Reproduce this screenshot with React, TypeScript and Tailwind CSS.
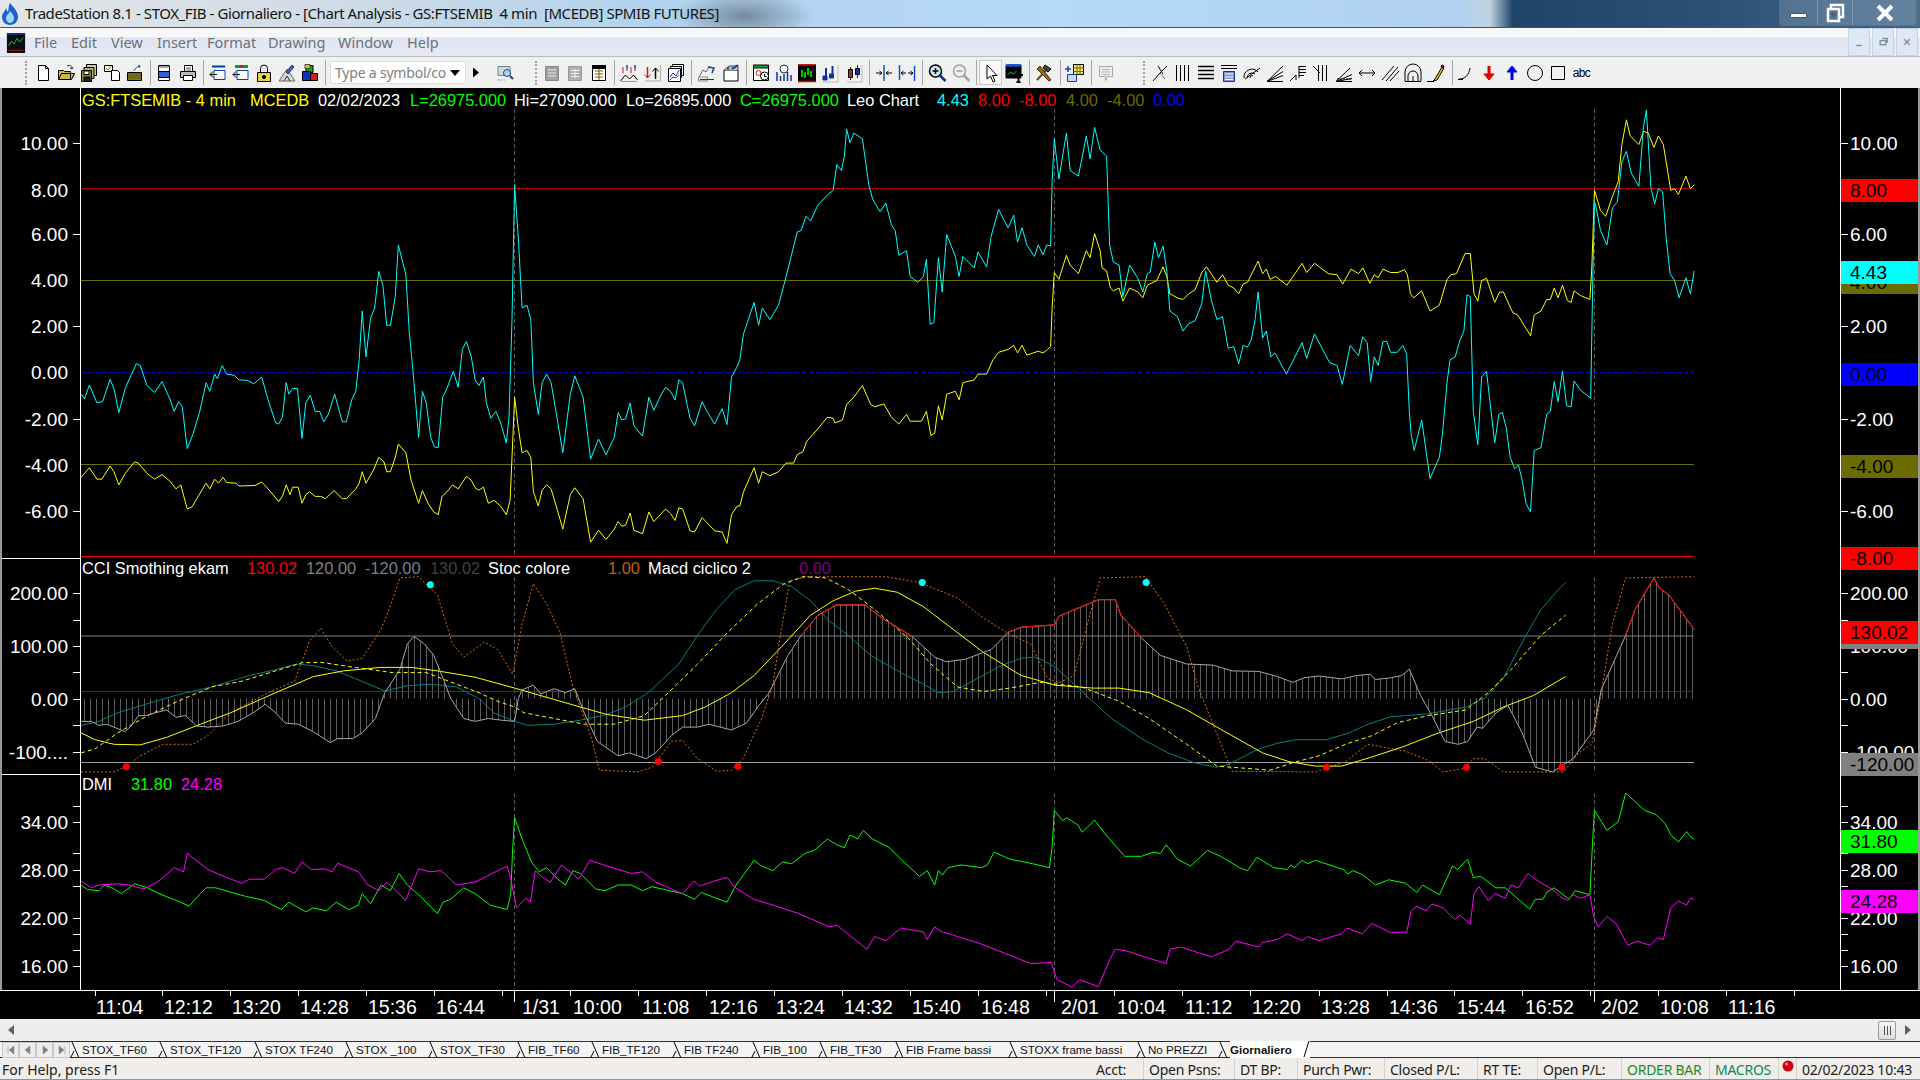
import type { ReactNode } from 'react'

// zoomed-crop coordinates are converted to page coordinates
const SX = 590 / 1568
const SY = 900 / 1568
const OX = [80, 660, 1240]

type Pt = [number, number]

function parse(raw: string, ox: number): Pt[] {
  return raw
    .trim()
    .split(/\s+/)
    .map((p) => {
      const [x, y] = p.split(',').map(Number)
      return [ox + x * SX, 90 + y * SY] as Pt
    })
}

function series(a: string, b: string, c: string): Pt[] {
  return [
    ...parse(a, OX[0]).filter((p) => p[0] <= 665),
    ...parse(b, OX[1]).filter((p) => p[0] > 665 && p[0] <= 1245),
    ...parse(c, OX[2]).filter((p) => p[0] > 1245),
  ]
}

const pts = (p: Pt[]) => p.map(([x, y]) => `${x.toFixed(1)},${y.toFixed(1)}`).join(' ')

function yAt(curve: Pt[], x: number) {
  for (let i = 1; i < curve.length; i++) {
    if (curve[i][0] >= x) {
      const [x0, y0] = curve[i - 1]
      const [x1, y1] = curve[i]
      return y0 + ((y1 - y0) * (x - x0)) / Math.max(x1 - x0, 0.01)
    }
  }
  return curve[curve.length - 1][1]
}

const CYAN = series(
  '3,530 12,538 25,514 45,545 60,543 80,504 90,520 103,562 120,520 130,505 150,477 160,480 178,515 198,527 218,508 240,540 250,560 262,543 272,552 285,625 300,600 318,560 335,510 345,525 358,495 365,503 378,480 390,495 410,497 422,505 445,506 462,512 483,500 500,540 520,580 528,582 538,570 548,510 555,530 565,520 578,520 590,607 600,545 612,532 625,560 637,560 648,578 660,565 677,530 697,578 708,578 722,540 733,525 742,470 750,385 760,465 772,398 783,380 794,316 805,340 815,410 825,410 838,360 846,270 866,322 875,420 885,490 900,605 910,525 920,545 932,605 942,622 952,623 964,535 975,520 992,490 1005,518 1016,452 1027,438 1040,465 1050,505 1060,515 1072,500 1080,545 1092,572 1105,560 1118,580 1133,615 1140,570 1148,400 1155,165 1165,260 1175,380 1188,375 1198,400 1205,510 1218,565 1228,510 1240,495 1252,510 1270,580 1283,632 1303,530 1315,498 1337,535 1357,643 1378,608 1398,635 1420,605 1430,562 1440,575 1450,573 1462,545 1472,585 1495,603 1512,535 1525,558 1545,530 1560,515 1568,525',
  '0,538 15,518 28,525 40,540 50,505 60,510 72,548 80,572 92,585 112,543 125,560 145,582 165,555 178,583 190,500 205,482 212,470 222,425 250,370 262,410 272,380 292,400 315,375 335,325 365,247 375,245 388,220 400,228 420,200 445,183 460,175 470,130 482,140 490,115 496,68 505,92 515,75 538,85 555,165 565,190 585,212 600,197 615,235 625,245 635,288 655,280 665,325 685,335 700,325 708,295 718,408 728,405 740,292 750,352 762,252 785,290 795,325 805,290 835,310 845,282 868,308 880,255 900,208 925,240 940,218 950,265 962,240 975,270 995,290 1005,270 1018,287 1028,270 1038,272 1042,160 1048,85 1060,155 1080,75 1090,140 1112,150 1133,80 1143,120 1155,65 1170,105 1187,115 1195,270 1205,300 1220,305 1230,360 1248,305 1270,328 1283,352 1295,320 1303,317 1315,265 1325,292 1337,272 1347,315 1355,385 1375,395 1390,420 1405,407 1422,402 1440,372 1450,315 1465,365 1480,400 1495,395 1510,450 1525,447 1538,477 1550,445 1568,435',
  '0,465 8,445 20,448 30,435 40,400 48,352 60,432 70,420 82,465 93,458 123,495 165,440 177,468 198,425 238,475 258,480 272,513 293,445 315,463 326,430 338,440 347,508 357,465 367,480 380,438 390,438 400,457 418,457 433,445 443,460 450,560 455,600 463,628 483,575 505,677 530,640 538,600 550,510 558,470 572,465 585,435 595,420 603,357 612,360 620,560 632,618 642,500 655,490 677,615 688,565 697,562 708,590 718,640 730,660 740,653 750,680 760,720 772,735 782,628 800,623 815,565 825,560 835,508 845,543 857,490 868,550 880,552 888,507 905,523 932,537 938,320 942,195 945,200 958,245 975,270 990,205 1003,195 1015,125 1027,107 1040,145 1060,168 1072,65 1080,35 1092,170 1102,198 1112,172 1123,177 1133,260 1143,320 1155,332 1167,362 1185,327 1197,355 1207,315',
)

const YELLOW = series(
  '3,675 12,668 25,658 45,678 58,678 80,655 90,665 103,688 120,668 145,648 155,650 178,668 198,678 218,670 240,682 255,695 268,688 285,730 298,726 335,685 345,695 358,678 368,685 380,675 390,684 415,685 422,690 465,689 483,683 500,695 528,717 538,708 548,688 558,705 565,692 580,692 590,720 600,705 610,700 625,708 640,708 652,712 675,698 697,712 708,712 733,695 742,685 750,665 760,685 780,662 794,640 808,648 815,665 825,665 838,640 846,617 866,632 880,680 900,720 910,698 925,720 940,735 952,740 962,708 975,700 990,688 1005,695 1015,685 1027,673 1040,680 1050,693 1060,697 1072,692 1085,720 1100,715 1118,725 1133,740 1143,715 1148,640 1155,535 1165,590 1175,632 1188,628 1198,640 1205,700 1218,725 1228,697 1240,688 1252,695 1270,735 1283,765 1303,705 1315,693 1337,712 1357,788 1378,767 1398,783 1420,765 1430,752 1440,760 1450,758 1462,737 1472,767 1495,773 1512,735 1525,752 1545,738 1560,730 1568,738',
  '0,738 15,730 28,738 40,750 50,728 60,730 80,768 92,770 112,745 145,768 165,770 178,790 190,740 205,725 212,725 222,700 250,658 262,685 272,665 292,672 315,665 335,650 355,650 365,635 380,630 390,612 420,590 445,570 460,572 465,580 485,575 496,548 515,535 538,515 560,548 570,552 595,547 615,570 635,582 655,565 665,577 695,577 708,560 720,602 730,598 740,550 750,575 762,530 785,525 795,540 805,510 835,505 845,495 868,495 885,470 900,457 925,452 940,445 950,458 962,445 975,462 1005,455 1018,458 1030,452 1038,447 1042,380 1048,318 1060,330 1080,288 1090,305 1112,320 1133,280 1143,292 1155,250 1170,280 1175,310 1187,315 1197,345 1205,350 1220,345 1230,368 1248,345 1270,352 1283,362 1295,340 1320,332 1337,308 1347,325 1355,355 1375,362 1390,365 1405,355 1422,348 1440,318 1452,308 1465,320 1480,335 1495,322 1510,340 1525,345 1538,355 1550,338 1568,332',
  '0,345 8,337 20,335 48,298 60,320 70,312 80,330 95,325 125,340 165,302 177,318 198,302 235,320 258,322 273,338 295,312 315,320 327,310 345,337 357,322 367,327 380,312 400,318 420,318 437,313 445,322 453,355 462,362 483,350 505,385 530,375 550,330 560,322 575,320 598,285 612,285 622,355 632,368 642,332 655,328 677,370 690,352 700,352 725,388 738,392 755,410 772,428 782,392 800,385 815,365 825,365 835,345 845,362 857,340 870,367 880,370 888,350 905,358 930,365 935,310 942,175 958,210 972,220 990,185 1005,160 1015,95 1027,52 1037,80 1060,95 1072,72 1085,75 1100,100 1112,80 1125,95 1145,175 1155,172 1165,182 1185,150 1197,172 1207,165',
)

const MACD = series(
  '3,1100 30,1100 50,1107 70,1105 90,1110 120,1118 140,1105 155,1090 175,1090 200,1085 230,1080 255,1093 280,1090 310,1108 340,1110 380,1108 420,1100 460,1085 492,1070 520,1085 545,1103 580,1105 620,1118 665,1137 685,1130 725,1130 750,1120 785,1095 810,1050 850,1010 870,965 888,952 915,965 940,985 965,1025 985,1060 1020,1095 1050,1100 1085,1095 1120,1098 1155,1100 1165,1060 1175,1045 1205,1037 1225,1052 1260,1043 1290,1050 1315,1043 1340,1085 1375,1135 1430,1160 1460,1155 1505,1165 1530,1155 1568,1135',
  '0,1145 30,1125 60,1110 100,1110 130,1105 190,1115 230,1103 260,1075 290,1050 340,985 375,950 420,915 470,897 545,897 590,920 670,952 730,988 760,996 810,992 880,975 925,945 960,936 1048,932 1060,917 1110,903 1165,888 1210,888 1225,915 1280,955 1330,985 1400,1000 1470,1002 1520,1012 1568,1018',
  '0,1015 50,1013 100,1022 140,1032 170,1024 210,1021 270,1026 310,1020 345,1018 360,1027 400,1024 430,1020 450,1009 480,1055 510,1090 545,1135 580,1140 605,1135 630,1110 645,1112 680,1085 712,1072 750,1120 785,1180 830,1188 850,1180 885,1165 940,1115 960,1045 1025,950 1050,905 1100,850 1115,868 1140,880 1207,940',
)

const MACD_RED = [
  parse('375,950 420,915 470,897 545,897 590,920 670,952', OX[1]),
  parse('925,945 960,936 1048,932 1060,917 1110,903 1165,888 1210,888 1225,915 1280,955', OX[1]),
  parse('1025,950 1050,905 1100,850 1115,868 1140,880 1207,940', OX[2]),
]

const TEAL = series(
  '3,1107 50,1100 100,1085 150,1075 200,1065 270,1052 350,1040 450,1020 520,1010 575,1000 620,1003 680,1012 730,1025 810,1047 870,1038 930,1035 1000,1040 1060,1060 1100,1085 1155,1100 1190,1107 1260,1105 1330,1098 1400,1088 1450,1075 1510,1050 1568,1020',
  '0,1040 50,1000 100,950 150,905 200,870 250,855 300,855 350,865 400,890 450,925 500,950 560,985 640,1015 700,1035 740,1050 780,1048 830,1030 900,1005 960,990 1000,988 1050,1005 1100,1035 1150,1065 1200,1095 1280,1130 1350,1155 1420,1172 1480,1180 1510,1175 1568,1157',
  '0,1163 50,1148 100,1138 150,1132 230,1132 290,1120 340,1105 400,1092 500,1087 600,1075 650,1060 700,1025 760,950 800,905 840,875 865,858',
)

const SIGNAL = series(
  '3,1120 40,1132 90,1140 160,1141 230,1128 320,1105 400,1085 520,1050 620,1022 700,1012 800,1006 880,1006 950,1012 1050,1023 1155,1042 1250,1060 1330,1075 1400,1088 1500,1098 1568,1098',
  '0,1098 60,1090 120,1075 190,1050 250,1020 330,965 400,915 460,890 520,873 570,868 630,875 700,900 770,935 860,980 960,1020 1050,1037 1150,1042 1220,1042 1300,1050 1400,1080 1480,1110 1568,1142',
  '0,1132 60,1155 130,1170 200,1178 270,1178 350,1162 430,1145 520,1122 620,1100 700,1075 780,1055 865,1022',
)

const SIGNAL_DASH = series(
  '3,1155 40,1148 100,1120 180,1090 260,1065 350,1040 430,1030 530,1010 590,998 640,997 720,1005 830,1015 920,1015 1000,1035 1060,1050 1110,1065 1155,1075 1180,1085 1260,1095 1340,1105 1420,1105 1500,1090 1568,1075',
  '0,1075 30,1045 100,1000 180,945 260,895 330,860 380,848 440,850 500,870 570,905 660,955 720,1000 790,1040 860,1048 930,1042 1010,1032 1120,1040 1220,1065 1300,1095 1400,1140 1480,1178 1568,1188',
  '0,1188 80,1185 140,1172 210,1160 280,1140 350,1125 420,1102 500,1090 600,1080 660,1050 720,1010 800,950 865,915',
)

const STOC = series(
  '3,1188 90,1188 125,1178 160,1160 220,1140 300,1140 340,1125 400,1085 500,1050 570,1030 610,960 640,938 670,970 710,995 750,990 800,940 830,890 850,850 900,848 950,880 990,965 1020,988 1075,962 1110,975 1150,1018 1175,930 1205,860 1240,895 1275,945 1310,1040 1360,1130 1380,1185 1480,1188 1520,1180 1568,1140',
  '0,1165 30,1135 60,1133 100,1165 150,1187 190,1185 220,1165 270,1095 300,1035 320,950 345,855 390,848 600,848 690,858 790,885 860,920 920,945 985,965 1030,1025 1060,1033 1100,1020 1140,920 1170,850 1290,848 1340,895 1400,970 1430,1040 1470,1105 1520,1187 1568,1188',
  '0,1188 200,1188 280,1170 340,1140 440,1152 500,1168 540,1188 590,1183 620,1165 650,1165 700,1188 860,1188 900,1155 935,1140 950,1090 990,930 1025,850 1207,848',
)

const DMI_PLUS = series(
  '3,1385 20,1393 50,1395 65,1385 85,1390 110,1400 145,1383 180,1390 210,1400 240,1408 268,1415 290,1422 320,1400 335,1390 360,1390 440,1405 490,1412 535,1428 555,1415 600,1432 620,1425 655,1430 680,1415 715,1428 740,1420 750,1400 772,1418 800,1385 825,1395 848,1365 870,1385 905,1405 950,1435 965,1415 985,1410 1020,1390 1050,1400 1090,1420 1135,1428 1145,1400 1150,1320 1155,1268 1175,1305 1200,1345 1220,1362 1240,1355 1270,1375 1290,1385 1310,1360 1330,1365 1370,1392 1395,1395 1430,1385 1465,1385 1495,1395 1520,1388 1568,1392',
  '0,1388 60,1400 92,1410 110,1398 145,1407 178,1415 200,1387 250,1342 270,1352 300,1360 325,1345 350,1348 385,1330 410,1325 445,1305 470,1315 490,1320 505,1298 525,1305 540,1290 565,1305 610,1320 640,1340 690,1370 710,1360 730,1385 740,1360 750,1368 765,1355 800,1350 855,1355 870,1350 888,1328 930,1340 990,1348 1035,1355 1042,1320 1048,1255 1070,1273 1080,1268 1110,1280 1122,1293 1155,1272 1185,1298 1235,1335 1280,1335 1310,1328 1330,1330 1345,1315 1375,1340 1410,1352 1455,1325 1490,1335 1540,1355 1568,1360',
  '0,1358 20,1360 45,1337 90,1355 125,1358 135,1350 145,1355 165,1342 180,1348 200,1342 275,1358 287,1366 300,1360 325,1367 360,1385 395,1376 440,1382 470,1398 485,1385 530,1402 565,1352 578,1358 605,1340 620,1372 640,1370 680,1390 705,1390 770,1427 785,1410 805,1410 815,1398 835,1390 875,1410 890,1395 930,1402 938,1300 942,1255 975,1290 1005,1275 1025,1225 1075,1255 1105,1262 1130,1278 1145,1298 1165,1310 1187,1292 1200,1303 1207,1305',
)

const DMI_MINUS = series(
  '3,1378 30,1390 50,1385 100,1383 130,1385 170,1392 210,1378 250,1355 275,1362 285,1330 340,1358 390,1372 430,1382 450,1375 490,1375 520,1358 540,1355 570,1365 590,1345 615,1358 650,1357 670,1362 685,1347 740,1362 765,1385 795,1395 815,1380 840,1395 865,1412 900,1357 930,1362 960,1360 1000,1385 1050,1380 1080,1370 1135,1352 1145,1375 1160,1425 1185,1408 1197,1415 1210,1360 1230,1372 1250,1380 1280,1350 1325,1375 1355,1342 1400,1352 1465,1365 1495,1362 1530,1380 1568,1392',
  '0,1388 40,1395 60,1400 90,1378 105,1387 145,1378 178,1372 200,1390 250,1410 290,1418 370,1435 450,1458 470,1455 550,1497 570,1475 600,1482 640,1460 700,1467 710,1480 730,1458 750,1467 770,1470 790,1475 850,1487 940,1510 985,1522 1040,1520 1055,1550 1095,1563 1115,1550 1165,1562 1195,1515 1210,1497 1240,1500 1345,1522 1355,1497 1385,1493 1430,1503 1465,1510 1510,1498 1530,1483 1568,1490',
  '0,1482 50,1493 60,1485 100,1480 125,1470 165,1482 180,1475 210,1482 270,1470 285,1460 325,1470 350,1452 400,1468 443,1467 455,1430 470,1422 495,1430 510,1418 540,1425 570,1445 585,1438 612,1453 622,1400 635,1388 660,1412 678,1400 705,1408 720,1385 740,1390 765,1365 785,1375 835,1395 850,1405 870,1412 885,1402 905,1408 930,1402 940,1440 952,1458 975,1440 1000,1453 1030,1490 1055,1483 1090,1490 1110,1477 1125,1480 1145,1425 1165,1413 1187,1420 1197,1408 1207,1410',
)

const HIST_BARS = Array.from({ length: 269 }, (_, i) => 84 + i * 6).filter((x) => x < 1694)

const CHART_TOP = 88
const SCALE = [
  { t: '10.00', y: 143 },
  { t: '8.00', y: 190 },
  { t: '6.00', y: 234 },
  { t: '4.00', y: 280 },
  { t: '2.00', y: 326 },
  { t: '0.00', y: 372 },
  { t: '-2.00', y: 419 },
  { t: '-4.00', y: 465 },
  { t: '-6.00', y: 511 },
  { t: '200.00', y: 593 },
  { t: '100.00', y: 646 },
  { t: '0.00', y: 699 },
  { t: '34.00', y: 822 },
  { t: '28.00', y: 870 },
  { t: '22.00', y: 918 },
  { t: '16.00', y: 966 },
]
const TICKS = [143, 234, 326, 419, 511, 593, 620, 646, 672, 699, 725, 752, 806, 822, 853, 870, 886, 918, 934, 950, 966]

const VALUE_BOXES = [
  { t: '8.00', y: 179, c: 'bg-[#ff0000]' },
  { t: '4.00', y: 271, c: 'bg-[#6b6b00]' },
  { t: '4.43', y: 261, c: 'bg-[#00ffff]' },
  { t: '0.00', y: 363, c: 'bg-[#0000ff]' },
  { t: '-4.00', y: 455, c: 'bg-[#6b6b00]' },
  { t: '-8.00', y: 547, c: 'bg-[#ff0000]' },
  { t: '120.00', y: 626, c: 'bg-[#808080]' },
  { t: '130.02', y: 621, c: 'bg-[#ff0000]' },
  { t: '-120.00', y: 753, c: 'bg-[#808080]' },
  { t: '31.80', y: 830, c: 'bg-[#00ff00]' },
  { t: '24.28', y: 890, c: 'bg-[#ff00ff]' },
]

const TIME_LABELS: [string, number][] = [
  ['11:04', 96], ['12:12', 164], ['13:20', 232], ['14:28', 300], ['15:36', 368], ['16:44', 436],
  ['1/31', 522], ['10:00', 573], ['11:08', 642], ['12:16', 709], ['13:24', 776], ['14:32', 844],
  ['15:40', 912], ['16:48', 981], ['2/01', 1061], ['10:04', 1117], ['11:12', 1185], ['12:20', 1252],
  ['13:28', 1321], ['14:36', 1389], ['15:44', 1457], ['16:52', 1525], ['2/02', 1601], ['10:08', 1660], ['11:16', 1728],
]
const TIME_TICKS = [95, 162, 230, 298, 366, 434, 502, 570, 638, 706, 774, 842, 910, 978, 1046, 1114, 1182, 1250, 1319, 1387, 1454, 1522, 1590, 1658, 1726, 1794]

const TABS = [
  { name: 'STOX_TF60', w: 'w-[88px]' },
  { name: 'STOX_TF120', w: 'w-[95px]' },
  { name: 'STOX TF240', w: 'w-[91px]' },
  { name: 'STOX _100', w: 'w-[84px]' },
  { name: 'STOX_TF30', w: 'w-[88px]' },
  { name: 'FIB_TF60', w: 'w-[74px]' },
  { name: 'FIB_TF120', w: 'w-[82px]' },
  { name: 'FIB TF240', w: 'w-[79px]' },
  { name: 'FIB_100', w: 'w-[67px]' },
  { name: 'FIB_TF30', w: 'w-[76px]' },
  { name: 'FIB Frame bassi', w: 'w-[114px]' },
  { name: 'STOXX frame bassi', w: 'w-[128px]' },
  { name: 'No PREZZI', w: 'w-[82px]' },
]

const UI_FONT = "font-['Noto_Sans',sans-serif]"
const CHART_FONT = "font-['Liberation_Sans',Arial,sans-serif]"

function Ico({ children }: { children: ReactNode }) {
  return (
    <span className="flex h-[23px] w-[23px] shrink-0 items-center justify-center">
      <svg viewBox="0 0 20 20" className="h-5 w-5" fill="none" stroke="#000" strokeWidth="1">
        {children}
      </svg>
    </span>
  )
}

function Sep() {
  return <span className="ml-1 mr-[2px] h-[25px] w-px shrink-0 bg-[#a8a8a8]" />
}

function Grip({ className }: { className: string }) {
  return <span className={`h-[24px] w-[2px] shrink-0 border-l-2 border-dotted border-[#a0a0a0] ${className}`} />
}

function Group({ w, children }: { w: string; children: ReactNode }) {
  return <div className={`flex shrink-0 items-center justify-between ${w}`}>{children}</div>
}

function Toolbar() {
  return (
    <div className={`flex h-[31px] items-center bg-[#f0f0f0] pl-[25px] ${UI_FONT}`}>
      <Grip className="mr-[4.5px]" />
      <Group w="w-[114px]">
        <Ico><path d="M5.5 2.5h7l3 3v12h-10zM12.5 2.5v3h3" fill="#fff" /></Ico>
        <Ico><path d="M2.5 16.5v-9h5l1 1h6v8zM2.5 16.5l3-6h13l-3 6z" fill="#c9b84c" /><path d="M11 3c3-1.5 5 0 5 3M16 6l-2-1M16 6l1.500-2" stroke="#333" /></Ico>
        <Ico><path d="M7.500 1.500h10v11h-10z" fill="#c9c9a0" /><path d="M5 4.500h10v11H5z" fill="#b4ad68" /><path d="M2.500 7.500h10v11h-10z" fill="#8f8a3a" /><path d="M5 8h5v3.500H5z" fill="#fff" /><path d="M5 14h6v4.500H5z" fill="#222" /></Ico>
        <Ico><path d="M2.500 2.500h8v6h-8z" fill="#fff" /><path d="M4 5l2 2 3-4" stroke="#7a7a00" /><path d="M9.500 7.500h6l2 2v8h-8z" fill="#fff" /></Ico>
        <Ico><path d="M2.500 9.500h14v8h-14z" fill="#7f7a1c" /><path d="M3 11h13M3 13h13M3 15h13" stroke="#5e5a10" /><path d="M9 8c1-3 3-4 6-5M15 3l-2-.5M15 3l-.5 2" stroke="#2050c0" /></Ico>
      </Group>
      <Sep />
      <Group w="w-[46.5px]">
        <Ico><path d="M4.500 2.500h11v15h-11z" fill="#fff" /><path d="M4.500 8.500h11v6h-11z" fill="#3060d0" /><path d="M5 3.500h10v1H5z" stroke="#9aa" /></Ico>
        <Ico><path d="M6.500 2.500h8v6h-8z" fill="#fff" /><path d="M2.500 8.500h15v6h-15z" fill="#bbb" /><path d="M5.500 12.500h9v5h-9z" fill="#fff" /><path d="M8 5h5M8 7h5" stroke="#555" /></Ico>
      </Group>
      <Sep />
      <Group w="w-[115px]">
        <Ico><path d="M4 3.500h13" stroke="#0040a0" strokeWidth="2" /><path d="M6 7.500h11v9H6z" fill="#fff" stroke="#0040a0" /><path d="M2 11.500h7M2 11.500l3-3M2 11.500l3 3" stroke="#000" /></Ico>
        <Ico><path d="M4 3.500h13" stroke="#00a030" strokeWidth="3" /><path d="M9 3.500h4" stroke="#e02020" strokeWidth="3" /><path d="M6 7.500h11v9H6z" fill="#fff" stroke="#0040a0" /><path d="M2 11.500h7M2 11.500l3-3M2 11.500l3 3" stroke="#000" /></Ico>
        <Ico><path d="M6.500 9V5.500a3.500 3.500 0 0 1 7 0V9" /><path d="M3.500 9.500h13v9h-13z" fill="#e3d24a" /><circle cx="10" cy="14" r="1.500" fill="#000" /></Ico>
        <Ico><path d="M2 18l8-12 8 12z" fill="#d8d8d8" stroke="#666" /><path d="M9 9l6-7 2 2-6 7z" fill="#4060c0" stroke="#203080" /><path d="M7 18l3-5 3 5" stroke="#333" /></Ico>
        <Ico><path d="M6 2.500h7v7H6z" fill="#20a020" /><path d="M2.500 8.500h8v9h-8z" fill="#1030c0" /><path d="M10.500 10.500h7v7h-7z" fill="#d02020" /><path d="M5 1.500h5v4H5z" fill="#e8c800" stroke="#444" /></Ico>
      </Group>
      <Sep />
      <div className="ml-[2px] flex h-[23px] w-[136px] shrink-0 items-center justify-between rounded-[3px] border border-[#dcdcdc] bg-white pl-1 pr-[5px] text-[14px] text-[#808080]">
        <span className="tracking-[-0.2px]">Type a symbol/co</span>
        <svg viewBox="0 0 10 6" className="h-[6px] w-[10px]"><path d="M0 0h10L5 6z" fill="#000" /></svg>
      </div>
      <svg viewBox="0 0 6 10" className="ml-[7px] h-[11px] w-[6px] shrink-0"><path d="M0 0l6 5-6 5z" fill="#000" /></svg>
      <span className="ml-[14px]"><Ico><path d="M3 3.500h12v9H3z" fill="#d0d8e0" stroke="#708090" /><circle cx="12" cy="10" r="3.500" fill="#a8d8f0" stroke="#204080" /><path d="M15 13l3 3" stroke="#204080" strokeWidth="2" /><path d="M3 17h7" stroke="#999" strokeDasharray="2 1" /></Ico></span>
      <Grip className="ml-[19px] mr-[3px]" />
      <Group w="w-[70px]">
        <Ico><path d="M3.500 3.500h13v14h-13z" fill="#a0a0a0" stroke="#888" /><path d="M6 7h8M6 10h8M6 13h8" stroke="#eee" /></Ico>
        <Ico><path d="M3.500 3.500h13v14h-13z" fill="#b0b0b0" stroke="#999" /><path d="M6 7.500h8M6 10.500h8M6 13.500h8M10 6v9" stroke="#eee" /></Ico>
        <Ico><path d="M3.500 2.500h13v15h-13z" fill="#fff" /><path d="M3.500 2.500h13v3h-13z" fill="#000" /><path d="M6 8h8M6 11h8M6 14h8M10 6v11" stroke="#806000" /></Ico>
      </Group>
      <Sep />
      <Group w="w-[70px]">
        <Ico><path d="M4 4v6M8 2v6M12 4v6M16 2v6" stroke="#c02020" /><path d="M8 2v4M16 2v4" stroke="#2040c0" /><path d="M1.500 18l5-6 4 4 4-4 4 5" stroke="#000" /><path d="M2 18.500h16" stroke="#999" /></Ico>
        <Ico><path d="M5.500 4v11" stroke="#c02020" strokeWidth="1.500" /><path d="M2.500 11.500l3 3.500 3-3.500" stroke="#c02020" /><path d="M13.500 16V5" stroke="#000" strokeWidth="1.500" /><path d="M10.500 8.500l3-3.500 3 3.500" stroke="#000" /><path d="M18.500 2v16H3" stroke="#aaa" /></Ico>
        <Ico><path d="M6.500 1.500h11v11h-11z" fill="#fff" /><path d="M4.500 3.500h11v11h-11z" fill="#fff" /><path d="M2.500 5.500h12v13h-12z" fill="#fff" /><path d="M4 14l3-4 3 3 3-6" stroke="#1030d0" /><path d="M4 17l3-3 3 1 3-3" stroke="#d02020" /></Ico>
      </Group>
      <Sep />
      <Group w="w-[48px]">
        <Ico><path d="M3 14l4-7 3 2 4-6" stroke="#666" /><path d="M2.500 14h9v4h-9z" stroke="#888" /><path d="M12 4l6 1-2 5" stroke="#0040a0" strokeWidth="1.500" /><path d="M4 16.500h14" stroke="#0040a0" /></Ico>
        <Ico><path d="M3 7h14v11H3z" fill="#fff" /><path d="M3 7l5-4h9v4" fill="#bbb" stroke="#555" /><path d="M7 7V4" /><path d="M11 6l6-4" stroke="#0040a0" strokeWidth="2" /></Ico>
      </Group>
      <Sep />
      <Group w="w-[116px]">
        <Ico><path d="M2.500 4.500h15v13h-15z" fill="#fff" /><path d="M2.500 2h15v3h-15z" fill="#10a040" /><circle cx="7.500" cy="10" r="2.500" stroke="#c02020" /><circle cx="13.500" cy="13" r="4" fill="#fff" stroke="#000" /><path d="M13.500 11v2.500h2" /></Ico>
        <Ico><circle cx="10" cy="6" r="4" fill="#fff" stroke="#203040" /><path d="M3 9v9M6.500 13v5M10 11v7M13.500 9v9M17 12v6" stroke="#1030a0" strokeWidth="1.500" /></Ico>
        <Ico><path d="M1.500 2h17v16h-17z" fill="#000" stroke="#000" /><path d="M5 7v7M8 9v6M11 5v7M14 8v6" stroke="#00ff00" strokeWidth="1.500" /><path d="M1 18.500h18M1 2h18" stroke="#e00000" strokeWidth="1.500" /></Ico>
        <Ico><path d="M6 5v12M12.500 3v12" stroke="#1030a0" strokeWidth="2" /><path d="M3 13h4v4H3zM9.500 11h4v4h-4z" fill="#1030a0" stroke="#1030a0" /><path d="M18 2v17H3" stroke="#bbb" /></Ico>
        <Ico><path d="M6.500 4v13M13.500 2v13" stroke="#222" /><path d="M4.500 6.500h4v8h-4z" fill="#c02020" /><path d="M11.500 5.500h4v6h-4z" fill="#1030c0" /><path d="M18 2v17H3" stroke="#bbb" /></Ico>
      </Group>
      <Sep />
      <Group w="w-[46px]">
        <Ico><path d="M10 2v16" stroke="#1050d0" strokeWidth="1.500" /><path d="M2 10h6M8 10L5.500 8M8 10l-2.500 2M18 10h-6M12 10l2.500-2M12 10l2.500 2" /></Ico>
        <Ico><path d="M2.500 2v15M17.500 3v15" stroke="#1050d0" strokeWidth="1.500" /><path d="M4 10h5M4 10l2.500-2M4 10l2.500 2M16 10h-5M16 10l-2.500-2M16 10l-2.500 2" /></Ico>
      </Group>
      <Sep />
      <Group w="w-[47px]">
        <Ico><circle cx="8.500" cy="8" r="6" fill="#cfe8f8" stroke="#000" strokeWidth="1.500" /><path d="M5.500 8h6M8.500 5v6" stroke="#000" strokeWidth="1.500" /><path d="M13 12.500l5.500 5.500" stroke="#1030a0" strokeWidth="2.500" /></Ico>
        <Ico><circle cx="8.500" cy="8" r="6" fill="#eee" stroke="#a0a0a0" strokeWidth="1.500" /><path d="M5.500 8h6" stroke="#a0a0a0" strokeWidth="1.500" /><path d="M13 12.500l5.500 5.500" stroke="#a0a0a0" strokeWidth="2.500" /></Ico>
      </Group>
      <Sep />
      <Group w="w-[46px]">
        <span className="flex h-[25px] w-[23px] shrink-0 items-center justify-center border border-[#c8c8c8] bg-[#f8f8f8]">
          <svg viewBox="0 0 20 20" className="h-5 w-5"><path d="M6 2v14l3.500-3 2.500 6 2-1-2.500-5.500H16z" fill="#fff" stroke="#000" /></svg>
        </span>
        <Ico><path d="M2 2h15v13H2z" fill="#000" stroke="#000" /><path d="M2 2.500h15" stroke="#1050e0" strokeWidth="2.500" /><path d="M3.500 12l3-3 3 2 3-3" stroke="#00e040" /><path d="M10 12h9M14.500 12v7M12.500 19h4" stroke="#000" strokeWidth="2" /></Ico>
      </Group>
      <Sep />
      <Group w="w-[24px]">
        <Ico><path d="M3 17L14 5" stroke="#6a4a10" strokeWidth="2" /><path d="M3 6l3-3 11 14-2 1z" fill="#8a6a20" stroke="#503008" /><path d="M11 2l6 4-3 3-5-4z" fill="#444" /></Ico>
      </Group>
      <Sep />
      <Group w="w-[24px]">
        <Ico><path d="M3 3v6M0 6h6" stroke="#1040d0" strokeWidth="1.500" /><path d="M8.500 1.500h10v10h-10z" fill="#ffec70" /><path d="M8.500 5h10M8.500 8.500h10M12 1.500v10M15 1.500v10" stroke="#806000" /><path d="M2.500 11.500h9v7h-9z" fill="#c8d8f0" stroke="#1040a0" /></Ico>
      </Group>
      <Sep />
      <Group w="w-[24px]">
        <Ico><path d="M3.500 3.500h13v10h-5l-2 4v-4h-6z" fill="#ececec" stroke="#a8a8a8" /><path d="M6 6.500h8M6 9h8M6 11.500h8" stroke="#b8b8b8" /></Ico>
      </Group>
      <Grip className="ml-[25px] mr-[3.5px]" />
      <Group w="w-[299px]">
        <Ico><path d="M3 18l7-8M10 10l7-7M8 3l5 8" /><path d="M10 10l5 6" stroke="#777" /></Ico>
        <Ico><path d="M3.500 2v16M7.500 2v16M11.500 2v16M15.500 2v16" /></Ico>
        <Ico><path d="M2 3.500h16M2 7.500h16M2 11.500h16M2 15.500h16" strokeWidth="1.500" /></Ico>
        <Ico><path d="M2 2.500h16M2 5.500h16" /><path d="M4.500 8.500h11v10h-11z" fill="#8090d0" stroke="#203080" /><path d="M6 11h8M6 14h8M6 16.500h8" stroke="#fff" /></Ico>
        <Ico><path d="M2 15a8 8 0 0 1 14-6M5 15a5 5 0 0 1 8-4" /><path d="M3 16L18 5" /><path d="M8 15a2 2 0 0 1 3-2" /></Ico>
        <Ico><path d="M2 18.500h16M2 18.500L18 3M2 18.500l16-6M2 18.500l16-10" /></Ico>
        <Ico><path d="M2 18l6-6v5M11 3v12M11 3.500h7M11 6.500h7M11 9.500h7M11 12.500h5" /></Ico>
        <Ico><path d="M2 3l7 7M7.500 2v16M11.500 2v16M15.500 2v16" /></Ico>
        <Ico><path d="M2 18.500h16M2 18.500L16 5M2 18.500l16-7M2 18.500l16-3" /><path d="M3 16h14" strokeDasharray="2 1" /></Ico>
        <Ico><path d="M2 10h16M2 10l3-3M2 10l3 3M18 10l-3-3M18 10l-3 3" /></Ico>
        <Ico><path d="M2 17L14 3M6 18L18 4M10 18L19 8" /></Ico>
        <Ico><path d="M2 18V9a8 8 0 0 1 16 0v9M5 18v-5a5 5 0 0 1 10 0v5M10 18v-5" /><path d="M2 18.500h16" /></Ico>
        <Ico><path d="M1 18.500h7" /><path d="M7 18l2-2 7-12 2 1-7 12z" fill="#f0d020" /><path d="M15 4l1-2 2 1-1 2z" fill="#c02020" /></Ico>
      </Group>
      <Sep />
      <Group w="w-[138.5px]">
        <Ico><path d="M3 16c6 0 10-4 11-11" /><path d="M2 16.500h5" /></Ico>
        <Ico><path d="M10 3v8" stroke="#e00000" strokeWidth="3" /><path d="M5 11h10l-5 6z" fill="#e00000" stroke="#e00000" /></Ico>
        <Ico><path d="M10 17V9" stroke="#0000f0" strokeWidth="3" /><path d="M5 9h10l-5-6z" fill="#0000f0" stroke="#0000f0" /></Ico>
        <Ico><circle cx="10" cy="10" r="7.500" /></Ico>
        <Ico><path d="M3.500 3.500h13v13h-13z" /></Ico>
        <span className="flex w-[23px] shrink-0 justify-center font-['Liberation_Sans',sans-serif] text-[12px] tracking-[-0.6px] text-black">abc</span>
      </Group>
    </div>
  )
}

function Plot({ top, h, children, legend }: { top: number; h: number; children: ReactNode; legend: ReactNode }) {
  return (
    <div className="relative w-full shrink-0 overflow-hidden" style={{ height: h }}>
      <svg className="absolute inset-0 h-full w-full" viewBox={`81 ${top} 1759 ${h}`} preserveAspectRatio="none" fill="none">
        {children}
      </svg>
      {legend}
    </div>
  )
}

function Line({ p, c, w = 1, dash }: { p: Pt[]; c: string; w?: number; dash?: string }) {
  return <polyline points={pts(p)} stroke={c} strokeWidth={w} strokeDasharray={dash} strokeLinejoin="round" />
}

function HLine({ y, c, dash }: { y: number; c: string; dash?: string }) {
  return <line x1="81" x2="1694" y1={y} y2={y} stroke={c} strokeWidth="1" strokeDasharray={dash} />
}

function Session({ y1, y2 }: { y1: number; y2: number }) {
  return (
    <>
      {[514.5, 1054.5, 1594.5].map((x) => (
        <line key={x} x1={x} x2={x} y1={y1} y2={y2} stroke="#5a5a5a" strokeWidth="1" strokeDasharray="4 3" />
      ))}
    </>
  )
}

function AxisColumn({ side }: { side: 'left' | 'right' }) {
  const isLeft = side === 'left'
  return (
    <div className={`relative h-full shrink-0 ${isLeft ? 'w-[78px]' : 'w-[77px]'}`}>
      {TICKS.map((y) => (
        <span
          key={y}
          className={`absolute h-px w-[7px] bg-white ${isLeft ? 'right-0' : 'left-0'}`}
          style={{ top: y - CHART_TOP }}
        />
      ))}
      {SCALE.map((s) => (
        <span
          key={s.t + s.y}
          className={`absolute h-6 text-[19px] leading-6 text-white ${isLeft ? 'right-[12px]' : 'left-[9px]'}`}
          style={{ top: s.y - 11 - CHART_TOP }}
        >
          {s.t}
        </span>
      ))}
      {isLeft ? (
        <>
          <span className="absolute right-[12px] h-6 text-[19px] leading-6 text-white" style={{ top: 752 - 11 - CHART_TOP }}>
            -100....
          </span>
          <span className="absolute left-0 h-px w-full bg-white" style={{ top: 558 - CHART_TOP }} />
          <span className="absolute left-0 h-px w-full bg-white" style={{ top: 774 - CHART_TOP }} />
        </>
      ) : (
        <>
          <span className="absolute left-[9px] h-6 text-[19px] leading-6 text-white" style={{ top: 752 - 11 - CHART_TOP }}>
            -100.00
          </span>
          {VALUE_BOXES.map((b) => (
            <span
              key={b.t + b.y}
              className={`absolute left-0 h-[23px] w-full pl-[9px] text-[19px] leading-[23px] text-black ${b.c}`}
              style={{ top: b.y - CHART_TOP }}
            >
              {b.t}
            </span>
          ))}
        </>
      )}
    </div>
  )
}

function Chart() {
  return (
    <div className={`flex flex-col bg-black ${CHART_FONT}`}>
      <div className="flex h-[902px]">
        <div className="w-[2px] shrink-0 bg-[#9a9a9a]" />
        <AxisColumn side="left" />
        <div className="w-px shrink-0 bg-white" />
        <div className="flex min-w-0 flex-1 flex-col">
          <Plot
            top={88}
            h={470}
            legend={
              <div className="relative flex h-[24px] items-center whitespace-nowrap text-[16.4px] leading-6">
                <span className="ml-px w-[168px] text-[#ffff00]">GS:FTSEMIB - 4 min</span>
                <span className="w-[68px] text-[#ffff00]">MCEDB</span>
                <span className="w-[92px] text-white">02/02/2023</span>
                <span className="w-[104px] text-[#00ff00]">L=26975.000</span>
                <span className="w-[112px] text-white">Hi=27090.000</span>
                <span className="w-[114px] text-white">Lo=26895.000</span>
                <span className="w-[107px] text-[#00ff00]">C=26975.000</span>
                <span className="w-[90px] text-white">Leo Chart</span>
                <span className="w-[41px] text-[#00ffff]">4.43</span>
                <span className="w-[41px] text-[#ff0000]">8.00</span>
                <span className="w-[47px] text-[#ff0000]">-8.00</span>
                <span className="w-[41px] text-[#6b6b00]">4.00</span>
                <span className="w-[46px] text-[#6b6b00]">-4.00</span>
                <span className="text-[#0000ff]">0.00</span>
              </div>
            }
          >
            <Session y1={109} y2={555} />
            <HLine y={188.5} c="#b00000" />
            <HLine y={280.5} c="#6b6b00" />
            <HLine y={372.5} c="#0000d0" dash="4 3" />
            <HLine y={464.5} c="#6b6b00" />
            <HLine y={556.5} c="#ff0000" />
            <Line p={YELLOW} c="#ffff00" />
            <Line p={CYAN} c="#00ffff" />
          </Plot>
          <Plot
            top={558}
            h={216}
            legend={
              <div className="relative flex h-[20px] items-center whitespace-nowrap text-[16.4px] leading-5">
                <span className="ml-px w-[165px] text-white">CCI Smothing ekam</span>
                <span className="w-[59px] text-[#ff0000]">130.02</span>
                <span className="w-[59px] text-[#808080]">120.00</span>
                <span className="w-[65px] text-[#708090]">-120.00</span>
                <span className="w-[58px] text-[#404040]">130.02</span>
                <span className="w-[120px] text-white">Stoc colore</span>
                <span className="w-[40px] text-[#c06000]">1.00</span>
                <span className="w-[151px] text-white">Macd ciclico 2</span>
                <span className="text-[#800080]">0.00</span>
              </div>
            }
          >
            <Session y1={577} y2={771} />
            {HIST_BARS.map((x) => (
              <line key={x} x1={x + 0.5} x2={x + 0.5} y1={698.5} y2={yAt(MACD, x)} stroke="#5c5c5c" strokeWidth="1" />
            ))}
            <HLine y={636} c="#808080" />
            <HLine y={691.5} c="#800080" />
            <HLine y={762.5} c="#a0a0a0" />
            <Line p={STOC} c="#d87000" w={1} dash="2 2" />
            <Line p={TEAL} c="#008080" />
            <Line p={SIGNAL_DASH} c="#ffff00" dash="4 3" />
            <Line p={SIGNAL} c="#ffff00" />
            <Line p={MACD} c="#a8a8a8" />
            {MACD_RED.map((p, i) => (
              <Line key={i} p={p} c="#ff0000" />
            ))}
            {parse('931,862', OX[0]).concat(parse('697,858 1292,858', OX[1])).map(([x, y]) => (
              <circle key={x} cx={x} cy={y} r="3.500" fill="#00ffff" />
            ))}
            {parse('123,1179 1537,1170', OX[0])
              .concat(parse('207,1178', OX[1]), parse('230,1180 602,1180 855,1180', OX[2]))
              .map(([x, y]) => (
                <circle key={x} cx={x} cy={y} r="3.500" fill="#ff0000" />
              ))}
          </Plot>
          <Plot
            top={774}
            h={216}
            legend={
              <div className="relative flex h-[20px] items-center whitespace-nowrap text-[16.4px] leading-5">
                <span className="ml-px w-[49px] text-white">DMI</span>
                <span className="w-[50px] text-[#00ff00]">31.80</span>
                <span className="text-[#ff00ff]">24.28</span>
              </div>
            }
          >
            <Session y1={793} y2={990} />
            <Line p={DMI_PLUS} c="#00ff00" />
            <Line p={DMI_MINUS} c="#ff00ff" />
          </Plot>
        </div>
        <div className="w-px shrink-0 bg-white" />
        <AxisColumn side="right" />
        <div className="w-[2px] shrink-0 bg-[#9a9a9a]" />
      </div>
      <div className="relative h-[29px] border-t border-white">
        {TIME_TICKS.map((x) => (
          <span key={x} className="absolute top-0 h-[5px] w-px bg-white" style={{ left: x }} />
        ))}
        {[514, 1054, 1594].map((x) => (
          <span key={x} className="absolute top-0 h-[11px] w-px bg-white" style={{ left: x }} />
        ))}
        {TIME_LABELS.map(([t, x]) => (
          <span key={t + x} className="absolute top-[4px] h-6 text-[19.500px] leading-6 text-white" style={{ left: x }}>
            {t}
          </span>
        ))}
      </div>
    </div>
  )
}

function NavBtn({ d }: { d: string }) {
  return (
    <span className="flex h-[16px] w-[17px] shrink-0 items-center justify-center border border-[#c8c8c8] bg-[#ececec]">
      <svg viewBox="0 0 10 10" className="h-[10px] w-[10px]"><path d={d} fill="#808080" stroke="#808080" strokeWidth="0.500" /></svg>
    </span>
  )
}

function Slash() {
  return (
    <svg viewBox="0 0 12 16" className="h-[16px] w-[12px] shrink-0" fill="none" stroke="#000" strokeWidth="1">
      <path d="M2 0l7 16M0.500 16l3.500-7" />
    </svg>
  )
}

function StatusCell({ w, children, c = 'text-[#202020]' }: { w: string; children?: ReactNode; c?: string }) {
  return <div className={`flex h-full shrink-0 items-center border-l border-[#d4d0ca] pl-[5px] pt-px ${w} ${c}`}>{children}</div>
}

export default function App() {
  return (
    <div className={`flex h-[1080px] w-[1920px] flex-col overflow-hidden bg-[#f0f0f0] ${UI_FONT}`}>
      {/* title bar */}
      <div className="flex h-[28px] shrink-0 items-center justify-between border-b border-[#49545e] bg-[radial-gradient(ellipse_70px_26px_at_745px_16px,rgba(70,80,92,0.55),transparent),linear-gradient(90deg,#e2e6e8_0%,#cfdbe6_18%,#b1d2ee_34%,#b6d9f8_55%,#b0d2f0_76%,#bfd3e2_77.600%,#1e4568_78.800%,#2c5277_90%,#4a6f90_100%)]">
        <div className="flex items-center pl-[1px]">
          <svg viewBox="0 0 18 24" className="h-[24px] w-[18px]">
            <path d="M9 1c3 4 8 8 8 14 0 5-4 8-8 8s-8-3-8-8c0-4 3-5 4-9 1 2 1 3 2 4 1-3 0-6 2-9z" fill="#1f5fd0" />
            <path d="M9 9c2 2 4 4 4 7s-2 5-4 5-4-2-4-5c0-3 3-4 4-7z" fill="#9fd4f7" />
          </svg>
          <span className="ml-[6px] whitespace-nowrap text-[15px] tracking-[-0.43px] text-[#141414]">
            TradeStation 8.1 - STOX_FIB - Giornaliero - [Chart Analysis - GS:FTSEMIB&nbsp; 4 min&nbsp; [MCEDB] SPMIB FUTURES]
          </span>
        </div>
        <div className="mr-[3px] flex h-[26px] self-start overflow-hidden rounded-b-[4px] border border-t-0 border-[#5a6e80] bg-white/15">
          <span className="flex w-[38px] items-center justify-center border-r border-[#8598a8]">
            <span className="mt-[6px] h-[5px] w-[17px] rounded-[1px] border border-[#555] bg-white" />
          </span>
          <span className="flex w-[35px] items-center justify-center border-r border-[#8598a8]">
            <svg viewBox="0 0 20 20" className="h-[20px] w-[20px]" fill="none" stroke="#fff" strokeWidth="2.500"><path d="M6 5V2h12v12h-4" /><path d="M3 6h11v12H3z" /><path d="M7 10h3v3H7z" stroke="#555" strokeWidth="1" /></svg>
          </span>
          <span className="flex w-[63px] items-center justify-center">
            <svg viewBox="0 0 20 20" className="h-[20px] w-[20px]" fill="none" stroke="#fff" strokeWidth="4"><path d="M3 3l14 14M17 3L3 17" /></svg>
          </span>
        </div>
      </div>

      {/* menu bar */}
      <div className="flex h-[29px] shrink-0 items-center justify-between border-b border-[#b8bcc4] bg-[linear-gradient(180deg,#f6f6f6_0%,#f8f8f8_30%,#e2e6f2_36%,#e6e9f4_100%)]">
        <div className="flex items-center pt-[2px] text-[14.500px] text-[#6c7278]">
          <svg viewBox="0 0 20 22" className="ml-[6px] h-[20px] w-[20px]">
            <path d="M0 0h20v22H0z" fill="#0c0c14" />
            <path d="M2 14l3-5 3 3 3-6 3 4 4-5" stroke="#20d040" fill="none" />
            <path d="M0 0h20v2H0z" fill="#1030a0" />
            <path d="M2 19h16" stroke="#c02020" />
          </svg>
          <span className="ml-[8px] w-[37px]">File</span>
          <span className="w-[40px]">Edit</span>
          <span className="w-[46px]">View</span>
          <span className="w-[50px]">Insert</span>
          <span className="w-[61px]">Format</span>
          <span className="w-[70px]">Drawing</span>
          <span className="w-[69px]">Window</span>
          <span>Help</span>
        </div>
        <div className="mr-[2px] flex h-full gap-[2px]">
          {['M6 15h8', 'M6 8h8v6H6zM9 5h7v6', 'M6 6l8 8M14 6l-8 8'].map((d) => (
            <span key={d} className="flex w-[22px] items-center justify-center border border-[#c4d4e4] bg-[#dfe9f4]">
              <svg viewBox="0 0 20 20" className="h-[14px] w-[14px]" fill="none" stroke="#7f8f9f" strokeWidth="2"><path d={d} /></svg>
            </span>
          ))}
        </div>
      </div>

      <Toolbar />
      <Chart />

      {/* horizontal scroll bar */}
      <div className="flex h-[22px] shrink-0 items-center justify-between bg-[#eeeeee] pl-[8px] pr-[9px]">
        <svg viewBox="0 0 6 10" className="h-[10px] w-[6px]"><path d="M6 0L0 5l6 5z" fill="#606060" /></svg>
        <div className="flex items-center gap-[9px]">
          <span className="flex h-[19px] w-[18px] items-center justify-center gap-[2px] rounded-[2px] border border-[#9a9a9a] bg-[linear-gradient(180deg,#f6f6f6,#dcdcdc)]">
            <span className="h-[9px] w-px bg-[#555]" />
            <span className="h-[9px] w-px bg-[#555]" />
            <span className="h-[9px] w-px bg-[#555]" />
          </span>
          <svg viewBox="0 0 6 10" className="h-[10px] w-[6px]"><path d="M0 0l6 5-6 5z" fill="#606060" /></svg>
        </div>
      </div>

      {/* sheet tabs */}
      <div className="flex h-[17px] shrink-0 items-start border-y border-[#303030] bg-[#f4f4f4] pl-[2px] font-['Liberation_Sans',sans-serif] text-[11.600px] leading-[15px] text-[#101010]">
        <NavBtn d="M2 1v8M8 1L3 5l5 4z" />
        <NavBtn d="M7 1L2 5l5 4z" />
        <NavBtn d="M3 1l5 4-5 4z" />
        <NavBtn d="M8 1v8M2 1l5 4-5 4z" />
        <Slash />
        {TABS.map((t) => (
          <div key={t.name} className={`flex shrink-0 items-start ${t.w}`}>
            <span className="flex-1 whitespace-nowrap">{t.name}</span>
            <Slash />
          </div>
        ))}
        <div className="-mt-px flex h-[17px] shrink-0 items-start bg-white">
          <span className="w-[72px] whitespace-nowrap pt-px font-bold">Giornaliero</span>
          <svg viewBox="0 0 8 16" className="h-[16px] w-[8px]" fill="none" stroke="#000"><path d="M7 0L2 16" /></svg>
        </div>
      </div>

      {/* status bar */}
      <div className="flex h-[21px] shrink-0 items-center bg-[#f0edea] text-[14px] tracking-[-0.25px]">
        <div className="flex-1 pl-[2px] pt-px tracking-normal text-[#202020]">For Help, press F1</div>
        <div className="flex h-full w-[53px] shrink-0 items-center pl-[6px] pt-px text-[#202020]">Acct:</div>
        <StatusCell w="w-[91px]">Open Psns:</StatusCell>
        <StatusCell w="w-[63px]">DT BP:</StatusCell>
        <StatusCell w="w-[87px]">Purch Pwr:</StatusCell>
        <StatusCell w="w-[93px]">Closed P/L:</StatusCell>
        <StatusCell w="w-[60px]">RT TE:</StatusCell>
        <StatusCell w="w-[84px]">Open P/L:</StatusCell>
        <StatusCell w="w-[88px]" c="text-[#1f8a1f]">ORDER BAR</StatusCell>
        <StatusCell w="w-[69px]" c="text-[#0a8a5a]">MACROS</StatusCell>
        <StatusCell w="w-[18px]">
          <svg viewBox="0 0 12 12" className="-ml-[2px] -mt-[6px] h-[12px] w-[12px] shrink-0">
            <circle cx="6" cy="6" r="5.500" fill="#d00010" />
            <circle cx="4.500" cy="4" r="1.500" fill="#ff9090" />
          </svg>
        </StatusCell>
        <StatusCell w="w-[124px]">02/02/2023 10:43</StatusCell>
      </div>
      <div className="h-px shrink-0 bg-[#8a96a0]" />
    </div>
  )
}
